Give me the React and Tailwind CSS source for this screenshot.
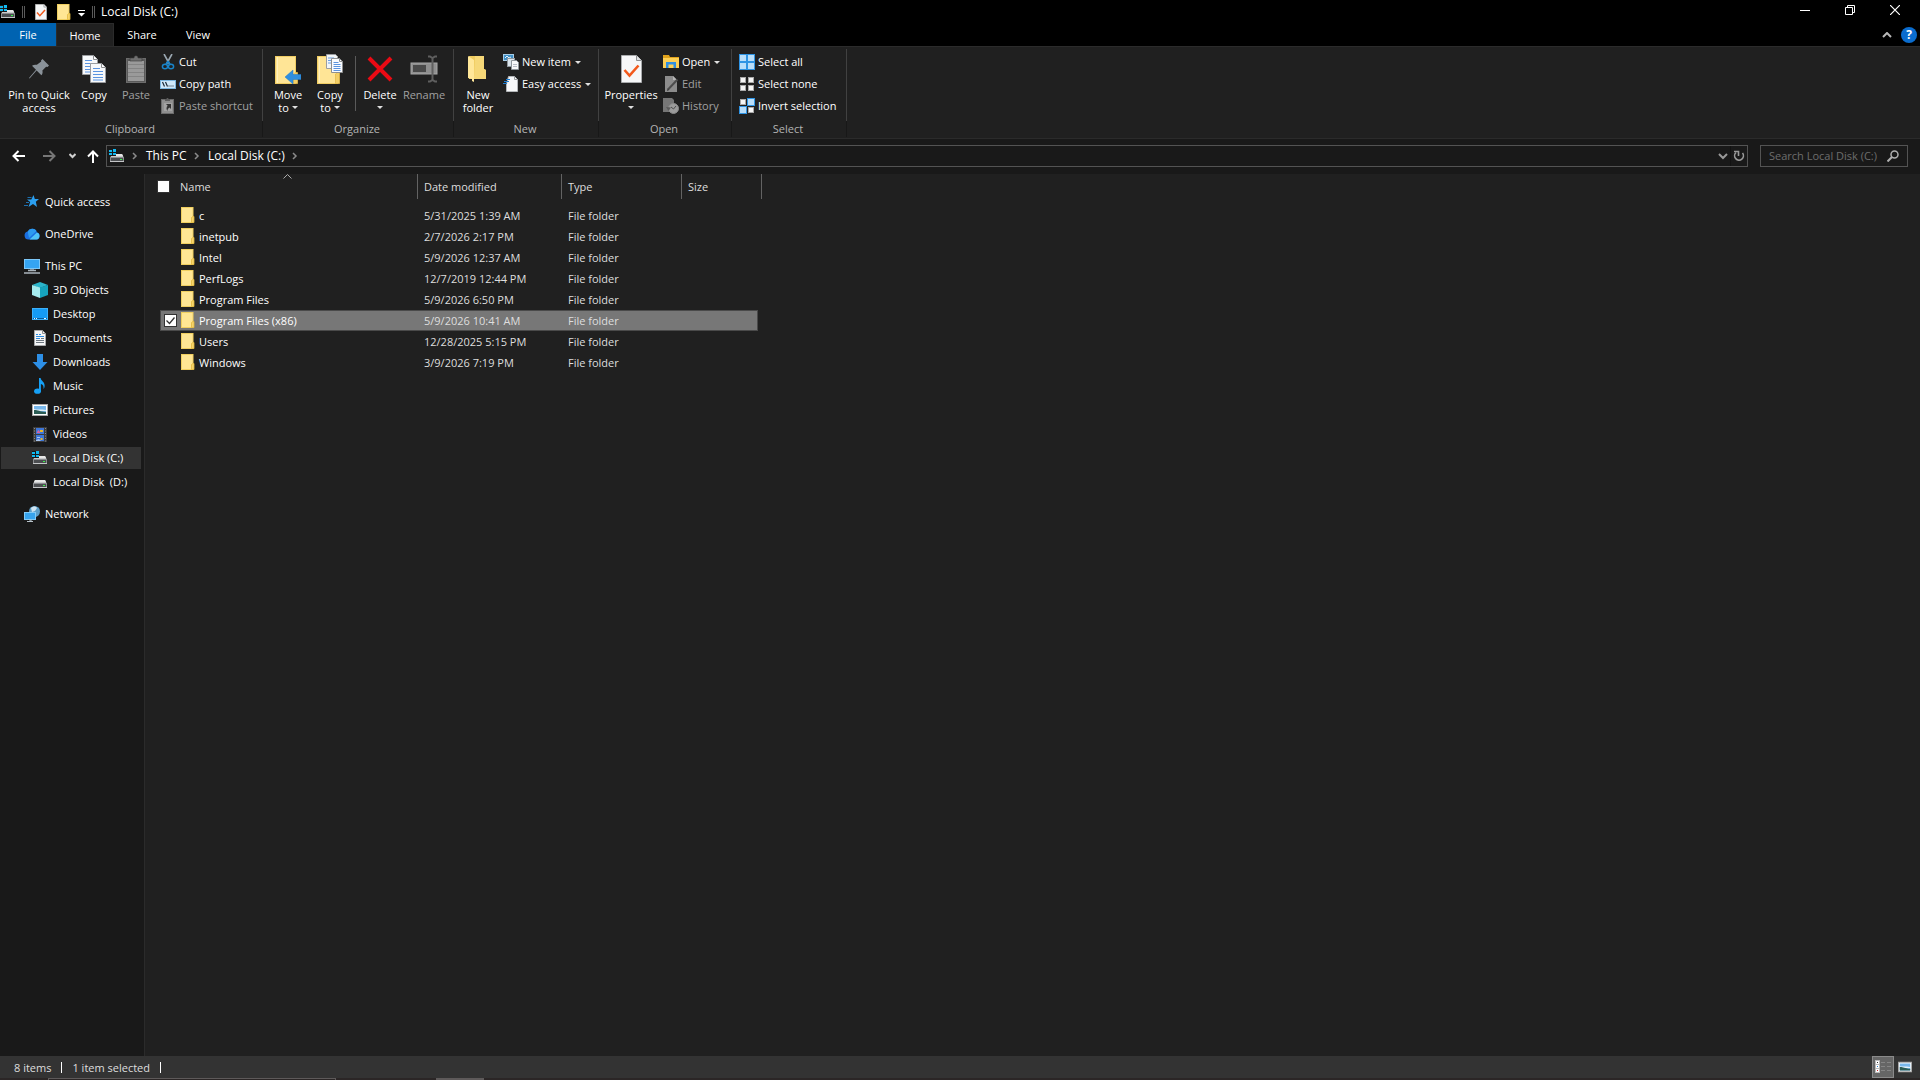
import React from 'react';

const DriveIcon = ({ windows = false }) => (
    <svg width="16" height="16" viewBox="0 0 16 16" className="shrink-0">
        <path d="M3 6h10l2 4H1z" fill="#c9cacc" />
        <path d="M3 6h10l1 2H2z" fill="#e6e6e6" />
        <rect x="1" y="9" width="14" height="5" fill="#8b8d90" />
        <rect x="2" y="10" width="12" height="3" fill="#4b4d50" />
        <rect x="1" y="13" width="14" height="1" fill="#c4c6c8" />
        <rect x="11" y="11" width="2" height="1" fill="#3df04a" />
        {windows && (
            <g>
                <rect x="0" y="1" width="7" height="7" fill="#191919" />
                <path d="M0 2h3v2H0zM4 1h3v3H4zM0 5h3v2H0zM4 5h3v2H4z" fill="#10b9f2" />
            </g>
        )}
    </svg>
);

const FolderIcon = () => (
    <svg width="14" height="16" viewBox="0 0 14 16" className="shrink-0">
        <rect x="0.5" y="0.5" width="11.5" height="15" fill="#ffe694" stroke="#f0cf60" />
        <path d="M12 9.5h1v6h-2.5v-5z" fill="#f6d46b" stroke="#e2b93f" strokeWidth="0.8" />
    </svg>
);

const CheckPageIcon = ({ width = 12, height = 16 }) => (
    <svg width={width} height={height} viewBox="0 0 21 28" className="shrink-0">
        <path d="M.5.5h15l5 5v22H.5z" fill="#f6f7f8" stroke="#a9abad" />
        <path d="M15.5.5v5h5" fill="#dfe1e3" stroke="#8d8f91" />
        <path d="M3.5 15l5 5.5 9-10" fill="none" stroke="#f2591c" strokeWidth="2.6" />
    </svg>
);

const PinIcon = () => (
    <svg width="22" height="22" viewBox="0 0 22 22">
        <path
            d="M14.5 1l6.5 6.5-1.5 1.6-1.4-.3-3.7 3.8c.5 2 .2 3.4-1 4.700L8.600 12.600 1.600 20.500 1 20l7-8.300L4 7.800c1.600-1.100 3-1.400 4.900-1L13.200 3.500 13 2.400z"
            fill="#8a9299"
        />
    </svg>
);

const TextPage = ({ x, y }) => (
    <g transform={`translate(${x} ${y})`}>
        <path d="M.5.5h11l4 4v15H.5z" fill="#f7f9fb" stroke="#9b9da0" />
        <path d="M11.5.5v4h4" fill="#fff" stroke="#8d8f91" />
        <path d="M3 5.5h7M3 8.5h10M3 11.5h10M3 14.5h10M3 17h10" stroke="#5b94e0" />
    </g>
);

const CopyIcon = () => (
    <svg width="24" height="28" viewBox="0 0 24 28">
        <TextPage x={0} y={0} />
        <TextPage x={8} y={8} />
    </svg>
);

const PasteIcon = () => (
    <svg width="20" height="28" viewBox="0 0 20 28">
        <rect x="0.5" y="3.5" width="19" height="24" fill="#5a5a5a" stroke="#6c6c6c" />
        <rect x="2" y="6" width="16" height="20" fill="#9a9a9a" />
        <path d="M2 9.5h16M2 13.5h16M2 17.5h16M2 21.5h16" stroke="#848484" />
        <path d="M4 6V3h4c0-3 4-3 4 0h4v3z" fill="#6f6f6f" stroke="#3a3a3a" strokeWidth="0.6" />
    </svg>
);

const CutIcon = () => (
    <svg width="16" height="16" viewBox="0 0 16 16">
        <path d="M4 0l5.5 10M12 0L6.5 10" stroke="#9aa7b1" strokeWidth="1.6" />
        <path d="M8 7l2 3.5M8 7l-2 3.5" stroke="#1883c9" strokeWidth="1.6" />
        <ellipse cx="5" cy="12.5" rx="2.6" ry="2.3" fill="none" stroke="#1883c9" strokeWidth="1.5" />
        <ellipse cx="11" cy="12.5" rx="2.6" ry="2.3" fill="none" stroke="#1883c9" strokeWidth="1.5" />
    </svg>
);

const CopyPathIcon = () => (
    <svg width="16" height="16" viewBox="0 0 16 16">
        <rect x="0.5" y="4.5" width="15" height="8" fill="#cfe9fb" stroke="#7db7e0" />
        <path d="M2.5 6l2 4.5M5.5 6l2 4.5" stroke="#1c2a36" strokeWidth="1.2" />
        <path d="M8.5 10h1M10.5 10h1M12.5 10h1" stroke="#1c2a36" strokeWidth="1.2" />
    </svg>
);

const PasteShortcutIcon = () => (
    <svg width="16" height="16" viewBox="0 0 16 16">
        <rect x="1.5" y="1.5" width="12" height="14" fill="#8f8f8f" stroke="#6c6c6c" />
        <path d="M5 3V1h1.5c0-1.5 2-1.5 2 0H10v2z" fill="#5c5c5c" />
        <rect x="4" y="5" width="8" height="8" fill="#a3a3a3" />
        <path d="M6 6h5v5L9.5 9.5c-1.5 1-2 1.8-2 3.5-1.5-2-1.2-4 .2-5.3z" fill="#333" />
    </svg>
);

const BigFolder = () => (
    <g>
        <rect x="0.5" y="2.5" width="20" height="27" fill="#ffe596" stroke="#f1cd63" />
        <path d="M2.5 3v26" stroke="#fff0bb" />
        <path d="M20.5 18.5h2v11h-4v-9.5z" fill="#f3cf68" stroke="#e6bb47" strokeWidth="0.8" />
    </g>
);

const MoveToIcon = () => (
    <svg width="26" height="30" viewBox="0 0 26 30">
        <BigFolder />
        <path d="M10 23l8-7v4.5h8v5h-8V30z" fill="#2f8fe0" stroke="#2479c4" strokeWidth="0.5" />
    </svg>
);

const CopyToIcon = () => (
    <svg width="26" height="30" viewBox="0 0 26 30">
        <BigFolder />
        <g transform="translate(9 0)">
            <path d="M.5.5h9l2 2v12H.5z" fill="#f2f5f8" stroke="#9b9da0" />
            <path d="M2 4h6M2 6.5h6M2 9h6" stroke="#6b9fe3" />
        </g>
        <g transform="translate(14 4)">
            <path d="M.5.5h8l3 3v11H.5z" fill="#fafcff" stroke="#8d8f91" />
            <path d="M8.5.5v3h3" fill="none" stroke="#8d8f91" />
            <path d="M2.5 4.5h5M2.5 6.5h7M2.5 8.5h7M2.5 10.5h7M2.5 12.5h7" stroke="#5b94e0" />
        </g>
    </svg>
);

const DeleteIcon = () => (
    <svg width="26" height="26" viewBox="0 0 26 26">
        <path d="M2 2l22 22M24 2L2 24" stroke="#ea0a14" strokeWidth="4" />
    </svg>
);

const RenameIcon = () => (
    <svg width="28" height="28" viewBox="0 0 28 28">
        <rect x="1" y="8" width="26" height="11" fill="#8f8f8f" stroke="#a6a6a6" />
        <rect x="3" y="10" width="13" height="7" fill="#4a4a4a" />
        <path d="M18 1.5h2l2.5 1.5 2.5-1.5h2M18 26.5h2l2.5-1.5 2.5 1.5h2M22.5 3v22" fill="none" stroke="#5f5f5f" strokeWidth="2" />
    </svg>
);

const NewFolderIcon = () => (
    <svg width="20" height="28" viewBox="0 0 20 28">
        <path d="M1 1h15v13l2 1v9H1z" fill="#efcb5e" />
        <path d="M7 1h9v13l2 1v9H6z" fill="#f6d878" />
        <path d="M0 1l6 4v22l-2-1v-2l-4-1z" fill="#ffe799" />
    </svg>
);

const NewItemIcon = () => (
    <svg width="16" height="16" viewBox="0 0 16 16">
        <rect x="0.5" y="0.5" width="10" height="6" fill="#3f8fc6" stroke="#a8cde6" />
        <path d="M2 4l2-2 2 2 2-1" stroke="#e6f3fb" fill="none" />
        <rect x="4.5" y="4.5" width="7" height="8" fill="#dbe6ee" stroke="#8f979d" />
        <path d="M8.5 6.5h5l2 2v7h-7z" fill="#f8fafc" stroke="#8f979d" />
        <path d="M10 10.5h4M10 12.5h4" stroke="#b9bfc8" />
    </svg>
);

const EasyAccessIcon = () => (
    <svg width="16" height="16" viewBox="0 0 16 16">
        <path d="M5.5.5h6l3 3v12h-11V8z" fill="#f7f8f9" stroke="#b3b6b9" />
        <path d="M11.5.5v3h3" fill="none" stroke="#9a9c9e" />
        <path d="M3 3.5h4M1 5.5h5M0 7.5h4" stroke="#1f7ed1" />
    </svg>
);

const OpenIcon = () => (
    <svg width="16" height="16" viewBox="0 0 16 16">
        <path d="M0 1h6l1 2h9v11H0z" fill="#e0a21b" />
        <path d="M0 4h16v10H0z" fill="#fccf55" />
        <path d="M3 14V8h10v6h-2.5v-3.500h-5V14z" fill="#2f8fe0" />
    </svg>
);

const EditIcon = () => (
    <svg width="16" height="16" viewBox="0 0 16 16">
        <path d="M2 0h8l4 4v12H2z" fill="#8c8c8c" />
        <path d="M10 0v4h4" fill="#b5b5b5" />
        <path d="M5 13.5L14.5 3.5" stroke="#4c4c4c" strokeWidth="2" />
        <path d="M4 15l.6-2.4 1.5 1.5z" fill="#333" />
    </svg>
);

const HistoryIcon = () => (
    <svg width="16" height="16" viewBox="0 0 16 16">
        <path d="M0 0h9l2 2v12H0z" fill="#767676" />
        <circle cx="10.5" cy="10.5" r="5" fill="#9c9c9c" stroke="#8a8a8a" />
        <path d="M10.5 11l2.5-3M8 9l2.5 2" stroke="#4c4c4c" fill="none" />
        <path d="M3 9l2.5 4L8 9.5" fill="#5b5b5b" />
    </svg>
);

// on = which of the four tiles are highlighted
const SelectIcon = ({ on }) => (
    <svg width="16" height="16" viewBox="0 0 16 16">
        {[[0, 0], [8, 0], [0, 8], [8, 8]].map(([x, y], i) =>
            on[i] ? (
                <g key={i}>
                    <rect x={x} y={y} width="8" height="8" fill="#2f94e4" />
                    <rect x={x + 1} y={y + 1} width="6" height="6" fill="#b9defa" />
                </g>
            ) : (
                <rect key={i} x={x + 1.5} y={y + 1.5} width="5" height="5" fill="#f6f6f6" stroke="#a9a9a9" />
            )
        )}
    </svg>
);

const StarIcon = () => (
    <svg width="16" height="16" viewBox="0 0 16 16">
        <path d="M9.5 1l1.3 4H15l-3.200 2.700L13 13 9 10l-4.500 3 1.700-5L3 5.500h4.300z" fill="#2b9ff0" />
        <path d="M3.500 3.500h4M2 8.500h3M0 11.500h4" stroke="#1d6fae" />
    </svg>
);

const CloudIcon = () => (
    <svg width="16" height="16" viewBox="0 0 16 16">
        <path d="M4.500 13.500a4 4 0 01-.8-7.900A5 5 0 0113 6.500a3.600 3.600 0 01-.5 7z" fill="#1a6fe0" />
        <path d="M5.500 13.500L12.900 6.500a3.600 3.600 0 01-.4 7z" fill="#4fc3f7" />
        <path d="M3.700 5.600A5 5 0 0112.500 5L5 12z" fill="#2d9bf0" />
    </svg>
);

const PcIcon = () => (
    <svg width="16" height="16" viewBox="0 0 16 16">
        <rect x="0.5" y="1.5" width="15" height="9" fill="#35a4f2" stroke="#7cc7f8" />
        <path d="M6 11h4v1.5H6z" fill="#6d7c88" />
        <path d="M4 12.5h8M0 15h16" stroke="#aab4bc" strokeWidth="1.5" />
    </svg>
);

const CubeIcon = () => (
    <svg width="16" height="16" viewBox="0 0 16 16">
        <path d="M0 3l8-3 8 3-8 3z" fill="#2bb5cb" />
        <path d="M0 3l8 2.5V16l-8-3z" fill="#a5ebee" />
        <path d="M8 5.5L16 3v10l-8 3z" fill="#16a3bd" />
    </svg>
);

const DesktopIcon = () => (
    <svg width="16" height="16" viewBox="0 0 16 16">
        <rect x="0.5" y="2.5" width="15" height="11" fill="#159bf5" stroke="#3cb0fa" />
        <path d="M1 12.5h14" stroke="#0a5d9c" />
        <path d="M2 12.5h1M4 12.5h1M12 12.5h2" stroke="#e8f5ff" />
    </svg>
);

const DocumentIcon = () => (
    <svg width="16" height="16" viewBox="0 0 16 16">
        <path d="M2.5.5h8l3 3v12h-11z" fill="#f5f6f7" stroke="#a7a9ab" />
        <path d="M10.5.5v3h3" fill="none" stroke="#8d8f91" />
        <path d="M4 4.5h2M7 4.5h2M4 6.5h8M4 8.5h4" stroke="#2b8be0" />
        <path d="M9 8.5h3M4 10.5h8M4 12.5h8" stroke="#6d7780" />
    </svg>
);

const DownloadIcon = () => (
    <svg width="16" height="16" viewBox="0 0 16 16">
        <path d="M5 0h6v8h4.5L8 16 .5 8H5z" fill="#2d8fe6" />
    </svg>
);

const MusicIcon = () => (
    <svg width="16" height="16" viewBox="0 0 16 16">
        <ellipse cx="5.5" cy="13.2" rx="3.400" ry="2.600" fill="#16a0f5" />
        <path d="M7 0h1.600c.4 3 4.600 4 4 8.500-.1 1-.6 2-1.100 2.500.5-3-.8-4.500-2.600-5v7.500H7z" fill="#16a0f5" />
    </svg>
);

const PictureIcon = ({ width = 16, height = 16 }) => (
    <svg width={width} height={height} viewBox="0 0 16 16">
        <rect x="0.5" y="2.5" width="15" height="11" fill="#fff" stroke="#a8a8a8" />
        <rect x="2" y="4" width="12" height="8" fill="#79b8ec" />
        <path d="M2 7c3 1 7 0 12 1v1H2z" fill="#e3f0f8" />
        <path d="M2 8c3-.5 5 1.500 12 2v2H2z" fill="#2c5d55" />
    </svg>
);

const VideoIcon = () => (
    <svg width="16" height="16" viewBox="0 0 16 16">
        <rect x="1" y="1" width="14" height="15" fill="#3b3b3b" />
        <rect x="4" y="2" width="8" height="6" fill="#3e76d8" />
        <rect x="4" y="9" width="8" height="6" fill="#3e76d8" />
        <path d="M5 6l1.500-2L8 6v1H5z" fill="#d463a5" />
        <path d="M8 4h3v2H8zM8.500 12h2v2h-2z" fill="#e8b62c" />
        <path d="M4 14l3-1 2 2H4zM5 11h3v1H5z" fill="#a8c4ee" />
        <path d="M2.500 2v14M13.500 2v14" stroke="#8a8a8a" strokeDasharray="1 1.500" />
    </svg>
);

const NetworkIcon = () => (
    <svg width="16" height="16" viewBox="0 0 16 16">
        <circle cx="10.5" cy="5.5" r="5.5" fill="#5d9fc9" />
        <path d="M7 2c2-2 5-2 6 0l-2 3-3 1z" fill="#cfe4f1" />
        <rect x="0.5" y="6.5" width="11" height="7" fill="#37a4ee" stroke="#83cbf7" />
        <path d="M5 14h2v1.500H3M9 15.500H5" stroke="#b9c4cc" />
    </svg>
);

const Chevron = ({ className = '' }) => (
    <svg width="6" height="8" viewBox="0 0 6 8" className={className}>
        <path d="M1 1l3 3-3 3" fill="none" stroke="#8a8a8a" strokeWidth="1.5" />
    </svg>
);

const DownTriangle = () => (
    <svg width="6" height="3" viewBox="0 0 6 3" className="inline-block shrink-0">
        <path d="M0 0h6L3 3z" fill="#e0e0e0" />
    </svg>
);

const LargeButton = ({ icon, lines, width, arrow = false, disabled = false }) => (
    <button type="button" disabled={disabled} className={`flex flex-col items-center ${width} ${disabled ? 'text-[#a0a0a0]' : 'text-white'}`}>
        <span className="mt-[2px] flex h-8 items-center justify-center">{icon}</span>
        <span className="mt-[3px] flex flex-col items-center leading-[13px] whitespace-nowrap">
            {lines.map((line, i) => (
                <span key={line} className="flex items-center gap-[3px]">
                    {line}
                    {arrow && lines.length > 1 && i === lines.length - 1 && <DownTriangle />}
                </span>
            ))}
            {arrow && lines.length === 1 && (
                <span className="flex h-[13px] items-center"><DownTriangle /></span>
            )}
        </span>
    </button>
);

const SmallButton = ({ icon, label, arrow = false, disabled = false }) => (
    <button type="button" disabled={disabled} className={`flex h-[22px] items-center gap-[3px] whitespace-nowrap ${disabled ? 'text-[#a0a0a0]' : 'text-white'}`}>
        {icon}
        <span>{label}</span>
        {arrow && <span className="ml-px flex"><DownTriangle /></span>}
    </button>
);

const Group = ({ label, width, children }) => (
    <section aria-label={label} className={`flex flex-col ${width}`}>
        <div className="flex h-[72px] items-start border-r border-[#414141] pt-[2px]">{children}</div>
        <div className="h-4 border-r border-[#181818] pr-[2px] text-center leading-4 text-[#b4b4b4]">{label}</div>
    </section>
);

const TABS = ['Share', 'View'];

const PC_ITEMS = [
    { label: '3D Objects', icon: <CubeIcon /> },
    { label: 'Desktop', icon: <DesktopIcon /> },
    { label: 'Documents', icon: <DocumentIcon /> },
    { label: 'Downloads', icon: <DownloadIcon /> },
    { label: 'Music', icon: <MusicIcon /> },
    { label: 'Pictures', icon: <PictureIcon /> },
    { label: 'Videos', icon: <VideoIcon /> },
    { label: 'Local Disk (C:)', icon: <DriveIcon windows />, active: true },
    { label: 'Local Disk  (D:)', icon: <DriveIcon /> },
];

const FILES = [
    { name: 'c', date: '5/31/2025 1:39 AM' },
    { name: 'inetpub', date: '2/7/2026 2:17 PM' },
    { name: 'Intel', date: '5/9/2026 12:37 AM' },
    { name: 'PerfLogs', date: '12/7/2019 12:44 PM' },
    { name: 'Program Files', date: '5/9/2026 6:50 PM' },
    { name: 'Program Files (x86)', date: '5/9/2026 10:41 AM', selected: true },
    { name: 'Users', date: '12/28/2025 5:15 PM' },
    { name: 'Windows', date: '3/9/2026 7:19 PM' },
];

const TitleBar = () => (
    <header className="flex h-[23px] items-center bg-black text-xs">
        <DriveIcon windows />
        <span className="ml-[6px] h-3 w-[3px] border-x border-[#5a5a5a]" />
        <button type="button" aria-label="Properties" className="ml-[10px]"><CheckPageIcon /></button>
        <button type="button" aria-label="New folder" className="ml-[10px]"><FolderIcon /></button>
        <button type="button" aria-label="Customize Quick Access Toolbar" className="ml-[7px] pt-[3px]">
            <svg width="7" height="7" viewBox="0 0 7 7">
                <path d="M0 .5h7" stroke="#fff" />
                <path d="M0 3h7L3.5 6.5z" fill="#fff" />
            </svg>
        </button>
        <span className="ml-[7px] h-3 w-[3px] border-x border-[#5a5a5a]" />
        <h1 className="ml-[6px] text-white">Local Disk (C:)</h1>
        <div className="mr-[3px] ml-auto flex self-stretch">
            <button type="button" aria-label="Minimize" className="flex w-[45px] items-center justify-center pb-1">
                <svg width="10" height="10" viewBox="0 0 10 10"><path d="M0 5.5h10" stroke="#fff" /></svg>
            </button>
            <button type="button" aria-label="Restore" className="flex w-[45px] items-center justify-center pb-1">
                <svg width="10" height="10" viewBox="0 0 10 10">
                    <path d="M.5 2.5h7v7h-7zM2.5 2.5v-2h7v7h-2" fill="none" stroke="#fff" />
                </svg>
            </button>
            <button type="button" aria-label="Close" className="flex w-[45px] items-center justify-center pb-1">
                <svg width="10" height="10" viewBox="0 0 10 10"><path d="M0 0l10 10M10 0L0 10" stroke="#fff" strokeWidth="1.2" /></svg>
            </button>
        </div>
    </header>
);

const RibbonTabs = () => (
    <nav className="flex h-[23px] items-stretch bg-black text-white">
        <button type="button" className="w-14 bg-[#0063b1]">File</button>
        <button type="button" className="-mb-px w-[58px] border-x border-t border-[#2b2b2b] bg-[#202020]">Home</button>
        {TABS.map((tab) => (
            <button type="button" key={tab} className="w-14">{tab}</button>
        ))}
        <button type="button" aria-label="Minimize the Ribbon" className="ml-auto flex items-center">
            <svg width="10" height="6" viewBox="0 0 10 6"><path d="M1 5l4-4 4 4" fill="none" stroke="#b8b8b8" strokeWidth="2" /></svg>
        </button>
        <button type="button" aria-label="Help" className="mr-[3px] ml-[9px] flex items-center">
            <span className="h-4 w-4 rounded-full bg-[#0a6cce] text-center text-xs leading-4 font-bold">?</span>
        </button>
    </nav>
);

const Ribbon = () => (
    <div className="flex h-[93px] border-y border-[#2b2b2b] bg-[#202020] pt-[2px]">
        <Group label="Clipboard" width="w-[263px]">
            <LargeButton icon={<PinIcon />} lines={['Pin to Quick', 'access']} width="ml-1 w-[70px]" />
            <LargeButton icon={<CopyIcon />} lines={['Copy']} width="w-10" />
            <LargeButton icon={<PasteIcon />} lines={['Paste']} width="w-11" disabled />
            <div className="ml-[2px] flex flex-col">
                <SmallButton icon={<CutIcon />} label="Cut" />
                <SmallButton icon={<CopyPathIcon />} label="Copy path" />
                <SmallButton icon={<PasteShortcutIcon />} label="Paste shortcut" disabled />
            </div>
        </Group>
        <Group label="Organize" width="w-[191px]">
            <LargeButton icon={<MoveToIcon />} lines={['Move', 'to']} width="ml-1 w-[42px]" arrow />
            <LargeButton icon={<CopyToIcon />} lines={['Copy', 'to']} width="w-[42px]" arrow />
            <span className="mx-1 mt-[5px] h-[55px] w-px bg-[#5a5a5a]" />
            <LargeButton icon={<DeleteIcon />} lines={['Delete']} width="w-10" arrow />
            <LargeButton icon={<RenameIcon />} lines={['Rename']} width="w-12" disabled />
        </Group>
        <Group label="New" width="w-[145px]">
            <LargeButton icon={<NewFolderIcon />} lines={['New', 'folder']} width="ml-[2px] w-11" />
            <div className="ml-[3px] flex flex-col">
                <SmallButton icon={<NewItemIcon />} label="New item" arrow />
                <SmallButton icon={<EasyAccessIcon />} label="Easy access" arrow />
            </div>
        </Group>
        <Group label="Open" width="w-[133px]">
            <LargeButton icon={<CheckPageIcon width={21} height={28} />} lines={['Properties']} width="ml-1 w-14" arrow />
            <div className="ml-1 flex flex-col">
                <SmallButton icon={<OpenIcon />} label="Open" arrow />
                <SmallButton icon={<EditIcon />} label="Edit" disabled />
                <SmallButton icon={<HistoryIcon />} label="History" disabled />
            </div>
        </Group>
        <Group label="Select" width="w-[115px]">
            <div className="ml-[7px] flex flex-col">
                <SmallButton icon={<SelectIcon on={[1, 1, 1, 1]} />} label="Select all" />
                <SmallButton icon={<SelectIcon on={[0, 0, 0, 0]} />} label="Select none" />
                <SmallButton icon={<SelectIcon on={[0, 1, 1, 0]} />} label="Invert selection" />
            </div>
        </Group>
    </div>
);

const AddressBar = () => (
    <div className="flex h-[35px] items-center bg-[#191919] px-3 pb-px text-xs text-white">
        <button type="button" aria-label="Back">
            <svg width="14" height="12" viewBox="0 0 14 12"><path d="M13 6H2M6.5 1L1.5 6l5 5" fill="none" stroke="#fff" strokeWidth="2" /></svg>
        </button>
        <button type="button" aria-label="Forward" className="ml-4">
            <svg width="14" height="12" viewBox="0 0 14 12"><path d="M1 6h11M7.5 1l5 5-5 5" fill="none" stroke="#777" strokeWidth="2" /></svg>
        </button>
        <button type="button" aria-label="Recent locations" className="ml-[13px]">
            <svg width="7" height="6" viewBox="0 0 7 6"><path d="M.5 1l3 3 3-3" fill="none" stroke="#d0d0d0" strokeWidth="2" /></svg>
        </button>
        <button type="button" aria-label="Up" className="ml-[11px]">
            <svg width="12" height="13" viewBox="0 0 12 13"><path d="M6 13V2M1 6.5l5-5 5 5" fill="none" stroke="#fff" strokeWidth="2" /></svg>
        </button>
        <div className="ml-[7px] flex h-[22px] flex-1 items-center border border-[#535353] pl-[2px]">
            <DriveIcon windows />
            <Chevron className="ml-[7px]" />
            <button type="button" className="ml-2 w-[38px] whitespace-nowrap">This PC</button>
            <Chevron className="ml-[10px]" />
            <button type="button" className="ml-2 w-[76px] whitespace-nowrap">Local Disk (C:)</button>
            <Chevron className="ml-2" />
            <button type="button" aria-label="Previous locations" className="mr-[2px] ml-auto">
                <svg width="10" height="7" viewBox="0 0 10 7"><path d="M1 1l4 4 4-4" fill="none" stroke="#999" strokeWidth="2" /></svg>
            </button>
            <button type="button" aria-label="Refresh" className="flex h-full items-center border-l border-[#121212] px-[2px]">
                <svg width="12" height="12" viewBox="0 0 12 12">
                    <path d="M3 2.5a4.400 4.400 0 106.500.5" fill="none" stroke="#999" strokeWidth="1.6" />
                    <path d="M1 1.5h4.500V6" fill="none" stroke="#999" strokeWidth="1.6" />
                </svg>
            </button>
        </div>
        <label className="ml-3 flex h-[22px] w-[148px] items-center border border-[#535353] pl-2 text-[11px]">
            <input type="text" aria-label="Search Local Disk (C:)" placeholder="Search Local Disk (C:)" className="w-[117px] bg-transparent outline-none placeholder:text-[#6d6d6d]" />
            <svg width="12" height="12" viewBox="0 0 12 12" className="ml-px shrink-0">
                <circle cx="7.5" cy="4.5" r="3.5" fill="none" stroke="#b0b0b0" strokeWidth="1.5" />
                <path d="M5 7l-4.500 4.500" stroke="#b0b0b0" strokeWidth="2" />
            </svg>
        </label>
    </div>
);

const SideItem = ({ icon, label, nested = false, active = false }) => (
    <a href="#" className={`mr-[3px] ml-px flex h-[22px] items-center gap-[5px] whitespace-pre text-white ${nested ? 'pl-[31px]' : 'pl-[23px]'} ${active ? 'bg-[#333]' : ''}`}>
        {icon}
        {label}
    </a>
);

const Sidebar = () => (
    <aside className="w-[145px] shrink-0 border-r border-[#2b2b2b] bg-[#191919] pt-[17px]">
        <nav className="flex flex-col gap-[10px]">
            <SideItem icon={<StarIcon />} label="Quick access" />
            <SideItem icon={<CloudIcon />} label="OneDrive" />
            <div className="flex flex-col gap-[2px]">
                <SideItem icon={<PcIcon />} label="This PC" />
                {PC_ITEMS.map((item) => (
                    <SideItem key={item.label} nested {...item} />
                ))}
            </div>
            <SideItem icon={<NetworkIcon />} label="Network" />
        </nav>
    </aside>
);

const HeaderCell = ({ children, width }) => (
    <th scope="col" className={`h-[31px] p-0 text-left align-top font-normal text-[#dedede] ${width}`}>
        <div className="flex h-[25px] items-center border-r border-[#636363] pl-[6px]">{children}</div>
    </th>
);

const FileTable = () => (
    <table className="ml-3 w-[605px] table-fixed border-collapse">
        <thead>
            <tr>
                <th scope="col" className="relative h-[31px] w-[261px] p-0 text-left align-top font-normal text-[#dedede]">
                    <div className="flex h-[25px] items-center border-r border-[#636363]">
                        <input type="checkbox" aria-label="Select all items" className="h-[13px] w-[13px] appearance-none border border-[#333] bg-white" />
                        <span className="ml-[10px]">Name</span>
                    </div>
                    <svg width="9" height="5" viewBox="0 0 9 5" className="absolute top-0 left-[126px]">
                        <path d="M.5 4.5l4-4 4 4" fill="none" stroke="#aaa" />
                    </svg>
                </th>
                <HeaderCell width="w-[144px]">Date modified</HeaderCell>
                <HeaderCell width="w-[120px]">Type</HeaderCell>
                <HeaderCell width="w-[80px]">Size</HeaderCell>
            </tr>
        </thead>
        <tbody className="text-[#dedede]">
            {FILES.map((file) => {
                const cell = file.selected ? 'border-y border-[#4a4a4a] bg-[#777]' : '';
                return (
                    <tr key={file.name}>
                        <td className="p-0 pl-[3px]">
                            <div className={`flex h-[21px] items-center text-white ${cell} ${file.selected ? 'border-l' : ''}`}>
                                {file.selected ? (
                                    <span className="relative ml-[3px] flex h-[13px] w-[13px]">
                                        <input type="checkbox" defaultChecked aria-label={file.name} className="h-[13px] w-[13px] appearance-none border border-[#333] bg-white" />
                                        <svg width="13" height="13" viewBox="0 0 13 13" className="pointer-events-none absolute inset-0">
                                            <path d="M2.5 6.5l3 3 5-6" fill="none" stroke="#333" strokeWidth="1.3" />
                                        </svg>
                                    </span>
                                ) : (
                                    <span className="w-[17px]" />
                                )}
                                <span className="ml-1 flex pb-px"><FolderIcon /></span>
                                <span className="ml-1">{file.name}</span>
                            </div>
                        </td>
                        <td className="p-0"><div className={`flex h-[21px] items-center pl-[6px] ${cell}`}>{file.date}</div></td>
                        <td className="p-0"><div className={`flex h-[21px] items-center pl-[6px] ${cell}`}>File folder</div></td>
                        <td className="p-0 pr-1"><div className={`h-[21px] ${cell} ${file.selected ? 'border-r' : ''}`} /></td>
                    </tr>
                );
            })}
        </tbody>
    </table>
);

const StatusBar = () => (
    <footer className="flex h-[22px] items-center bg-[#333] pl-[14px] text-[#dedede]">
        <span className="pt-px">8 items</span>
        <span className="ml-[10px] h-[11px] w-px bg-white" />
        <span className="ml-[10px] pt-px">1 item selected</span>
        <span className="ml-[10px] h-[11px] w-px bg-white" />
        <div className="mr-2 ml-auto flex h-full items-center gap-1">
            <button type="button" aria-label="Details view" className="flex h-[22px] w-[22px] items-center justify-center border border-[#8a8a8a] bg-[#666]">
                <svg width="16" height="14" viewBox="0 0 16 14">
                    <path d="M0 0h5v13H0z" fill="#bbb" />
                    <path d="M1 1h3v3H1zM1 5h3v3H1zM1 9h3v3H1z" fill="#fff" />
                    <path d="M2 2.5h1" stroke="#333" />
                    <path d="M2 6.5h1" stroke="#1f7ed1" />
                    <path d="M2 10.5h1" stroke="#c22" />
                    <path d="M6 2.5h4M12 2.5h4M6 6.5h4M12 6.5h4M6 10.5h4M12 10.5h4" stroke="#858585" />
                </svg>
            </button>
            <button type="button" aria-label="Large thumbnails view"><PictureIcon width={14} height={14} /></button>
        </div>
    </footer>
);

// sliver of the taskbar under the window
const TaskbarEdge = () => (
    <div className="flex h-[2px] bg-[#2b2626]">
        <span className="ml-12 w-72 border-x border-t border-[#5e5a5a]" />
        <span className="ml-[100px] w-12 bg-[#5e5a5a]" />
    </div>
);

export default function App() {
    return (
        <div className="flex h-screen flex-col overflow-hidden bg-[#202020] font-['Open_Sans','Noto_Sans',sans-serif] text-[11px] leading-4">
            <TitleBar />
            <RibbonTabs />
            <Ribbon />
            <AddressBar />
            <main className="flex min-h-0 flex-1">
                <Sidebar />
                <div className="min-w-0 flex-1">
                    <FileTable />
                </div>
            </main>
            <StatusBar />
            <TaskbarEdge />
        </div>
    );
}
